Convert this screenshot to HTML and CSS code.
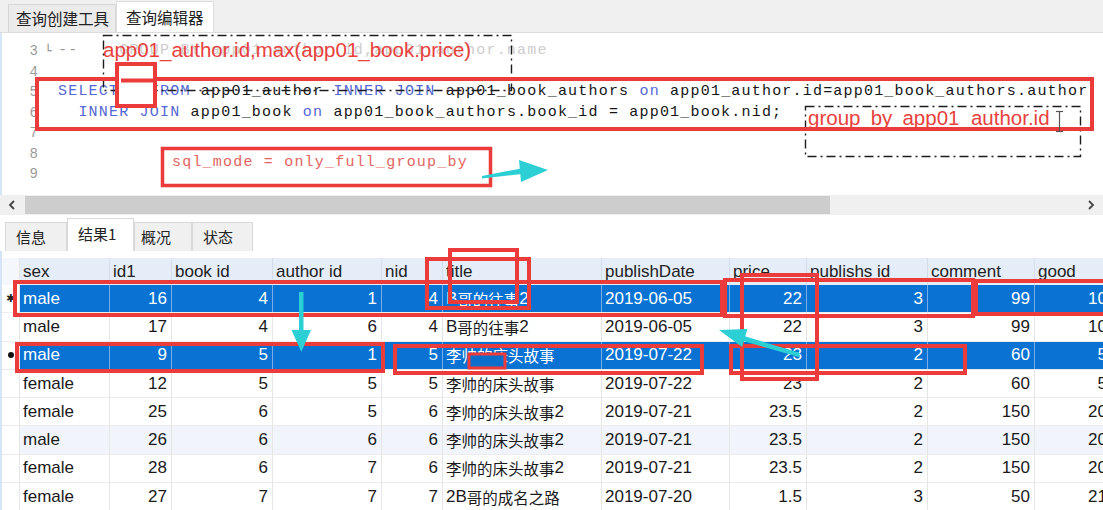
FILE: index.html
```html
<!DOCTYPE html>
<html lang="zh-CN">
<head>
<meta charset="utf-8">
<title>查询编辑器</title>
<link rel="stylesheet" href="styles.css">
</head>
<body>
<div class="app">
  <div class="tabbar">
    <div class="tab">查询创建工具</div>
    <div class="tab active">查询编辑器</div>
  </div>

  <div class="editor">
    <div class="line"><span class="ln">3</span><span class="fold">└</span><span class="code"><span class="dash">--</span><span class="cm">    GROUP BY app01_author.id,app01_author.name</span></span></div>
    <div class="line"><span class="ln">4</span><span class="fold"></span><span class="code"></span></div>
    <div class="line"><span class="ln">5</span><span class="fold"></span><span class="code"><span class="kw">SELECT</span> * <span class="kw">FROM</span> app01_author <span class="kw">INNER JOIN</span> app01_book_authors <span class="kw">on</span> app01_author.id=app01_book_authors.author</span></div>
    <div class="line"><span class="ln">6</span><span class="fold"></span><span class="code">  <span class="kw">INNER JOIN</span> app01_book <span class="kw">on</span> app01_book_authors.book_id = app01_book.nid;</span></div>
    <div class="line"><span class="ln">7</span><span class="fold"></span><span class="code"></span></div>
    <div class="line"><span class="ln">8</span><span class="fold"></span><span class="code"></span></div>
    <div class="line"><span class="ln">9</span><span class="fold"></span><span class="code"></span></div>
  </div>

  <div class="hscroll">
    <svg class="chev" width="10" height="12" viewBox="0 0 10 12"><polyline points="7,2 3,6 7,10" fill="none" stroke="#444" stroke-width="1.8"/></svg>
    <div class="thumb"></div>
    <div class="track"></div>
    <svg class="chev" width="10" height="12" viewBox="0 0 10 12"><polyline points="3,2 7,6 3,10" fill="none" stroke="#444" stroke-width="1.8"/></svg>
  </div>

  <div class="restabs">
    <div class="rtab w62">信息</div>
    <div class="rtab active w67">结果1</div>
    <div class="rtab w58 tight">概况</div>
    <div class="rtab w61">状态</div>
  </div>

  <div class="results">
    <div class="row head">
      <div class="ind"></div>
      <div class="c">sex</div><div class="c">id1</div><div class="c">book id</div><div class="c">author id</div><div class="c">nid</div><div class="c">title</div><div class="c">publishDate</div><div class="c">price</div><div class="c">publishs id</div><div class="c">comment</div><div class="c">good</div>
    </div>
    <div class="row sel">
      <div class="ind"><span class="star">✱</span></div>
      <div class="c">male</div><div class="c r">16</div><div class="c r">4</div><div class="c r">1</div><div class="c r">4</div><div class="c">B<span class="zh">哥的往事</span>2</div><div class="c">2019-06-05</div><div class="c r">22</div><div class="c r">3</div><div class="c r">99</div><div class="c r">10</div>
    </div>
    <div class="row">
      <div class="ind"></div>
      <div class="c">male</div><div class="c r">17</div><div class="c r">4</div><div class="c r">6</div><div class="c r">4</div><div class="c">B<span class="zh">哥的往事</span>2</div><div class="c">2019-06-05</div><div class="c r">22</div><div class="c r">3</div><div class="c r">99</div><div class="c r">10</div>
    </div>
    <div class="row sel">
      <div class="ind"><span class="dot"></span></div>
      <div class="c">male</div><div class="c r">9</div><div class="c r">5</div><div class="c r">1</div><div class="c r">5</div><div class="c"><span class="zh">李帅的床头故事</span></div><div class="c">2019-07-22</div><div class="c r">23</div><div class="c r">2</div><div class="c r">60</div><div class="c r">5</div>
    </div>
    <div class="row">
      <div class="ind"></div>
      <div class="c">female</div><div class="c r">12</div><div class="c r">5</div><div class="c r">5</div><div class="c r">5</div><div class="c"><span class="zh">李帅的床头故事</span></div><div class="c">2019-07-22</div><div class="c r">23</div><div class="c r">2</div><div class="c r">60</div><div class="c r">5</div>
    </div>
    <div class="row">
      <div class="ind"></div>
      <div class="c">female</div><div class="c r">25</div><div class="c r">6</div><div class="c r">5</div><div class="c r">6</div><div class="c"><span class="zh">李帅的床头故事</span>2</div><div class="c">2019-07-21</div><div class="c r">23.5</div><div class="c r">2</div><div class="c r">150</div><div class="c r">20</div>
    </div>
    <div class="row tint">
      <div class="ind"></div>
      <div class="c">male</div><div class="c r">26</div><div class="c r">6</div><div class="c r">6</div><div class="c r">6</div><div class="c"><span class="zh">李帅的床头故事</span>2</div><div class="c">2019-07-21</div><div class="c r">23.5</div><div class="c r">2</div><div class="c r">150</div><div class="c r">20</div>
    </div>
    <div class="row">
      <div class="ind"></div>
      <div class="c">female</div><div class="c r">28</div><div class="c r">6</div><div class="c r">7</div><div class="c r">6</div><div class="c"><span class="zh">李帅的床头故事</span>2</div><div class="c">2019-07-21</div><div class="c r">23.5</div><div class="c r">2</div><div class="c r">150</div><div class="c r">20</div>
    </div>
    <div class="row">
      <div class="ind"></div>
      <div class="c">female</div><div class="c r">27</div><div class="c r">7</div><div class="c r">7</div><div class="c r">7</div><div class="c">2B<span class="zh">哥的成名之路</span></div><div class="c">2019-07-20</div><div class="c r">1.5</div><div class="c r">3</div><div class="c r">50</div><div class="c r">21</div>
    </div>
  </div>

  <svg class="marks" width="1103" height="510" viewBox="0 0 1103 510">
    <g fill="none" stroke="#1c1c1c" stroke-width="1.4" stroke-dasharray="9 4 2 4">
      <rect x="103.5" y="35.5" width="408" height="55"/>
      <rect x="805.5" y="106.5" width="275" height="50"/>
    </g>
    <g fill="none" stroke="#ec3b3b" stroke-width="4">
      <rect x="37" y="79" width="1055" height="50"/>
      <rect x="117" y="64" width="38" height="42" fill="#fff"/>
      <line x1="121" y1="80.5" x2="155" y2="80.5"/>
      <rect x="162.5" y="148.5" width="328" height="37" stroke-width="3.5"/>
      <rect x="15" y="282" width="707" height="33"/>
      <rect x="725" y="280" width="248" height="36"/>
      <rect x="976" y="281" width="140" height="33"/>
      <rect x="742" y="275" width="75" height="104"/>
      <rect x="450" y="250" width="67" height="52"/>
      <rect x="427" y="259" width="102" height="49"/>
      <rect x="17" y="344" width="366" height="27"/>
      <rect x="395" y="346" width="307" height="27"/>
      <rect x="731" y="346" width="234" height="27"/>
      <rect x="469" y="354" width="36" height="14" stroke-width="3" fill="#0a6fcc"/>
    </g>
    <g fill="#2bcfd4">
      <polygon points="482,176 521,168.5 522,174 482,178.5"/>
      <polygon points="519,160 548,170 521,182"/>
      <rect x="299" y="292" width="4.5" height="42"/>
      <polygon points="291.5,330 311,330 301.3,352"/>
      <polygon points="744,336 800,353 799,357 743,341"/>
      <polygon points="719,330 747.4,329 742.1,347"/>
    </g>
    <g stroke="#555" stroke-width="1.2" fill="none">
      <line x1="1059.5" y1="112" x2="1059.5" y2="131"/>
      <line x1="1056" y1="111.5" x2="1063" y2="111.5"/>
      <line x1="1056" y1="131.5" x2="1063" y2="131.5"/>
    </g>
  </svg>

  <div class="note n1">app01_author.id,max(app01_book.price)</div>
  <div class="note n2">group by app01_author.id</div>
  <div class="note n3">sql_mode = only_full_group_by</div>
</div>
</body>
</html>
```
FILE: styles.css
```css
* { box-sizing: border-box; margin: 0; padding: 0; }
html, body { width: 1103px; height: 510px; overflow: hidden; background: #fff; }
body { font-family: "Liberation Sans", "Noto Sans CJK SC", sans-serif; color: #1a1a1a; }

.app { position: relative; width: 1103px; height: 510px; overflow: hidden; display: flex; flex-direction: column; }

/* top tabs */
.tabbar { height: 33px; flex: none; background: #f0f0f0; border-bottom: 1px solid #dcdcdc; display: flex; align-items: flex-end; padding-left: 8px; }
.tab { height: 28px; padding: 0 6px 0 7px; font-family: "Noto Sans CJK SC", sans-serif; font-size: 15.5px; line-height: 27px; background: #ebebeb; border: 1px solid #d6d6d6; border-bottom: none; color: #222; }
.tab.active { height: 31px; background: #fff; padding: 0 9px; line-height: 30px; border-color: #dedede; }

/* editor */
.editor { height: 162px; flex: none; padding-top: 8px; background: #fff; border-left: 2px solid #d3e5f6; overflow: hidden; }
.line { display: flex; height: 20.5px; line-height: 20.5px; white-space: pre; }
.ln { width: 36px; flex: none; text-align: right; font-family: "Liberation Mono", monospace; font-size: 14px; color: #9a9a9a; }
.fold { width: 20px; flex: none; text-align: center; font-family: "DejaVu Sans Mono", monospace; font-size: 12px; color: #8a8a8a; }
.code { font-family: "Liberation Mono", monospace; font-size: 15px; letter-spacing: 1.2px; color: #151515; white-space: pre; }
.dash { color: #9a9a9a; }
.cm { color: #cdcdcd; }
.kw { color: #5468d4; }

/* horizontal scrollbar */
.hscroll { height: 20px; flex: none; background: #f0f0f0; display: flex; align-items: center; padding: 0 7px 0 7px; gap: 8px; }
.chev { flex: none; }
.thumb { width: 805px; height: 18px; background: #cdcdcd; flex: none; }
.track { flex: 1; }

/* result tabs */
.restabs { height: 33px; flex: none; margin-top: 3px; display: flex; align-items: flex-end; padding-left: 5px; }
.rtab { height: 29px; padding-left: 10px; background: #f0f0f0; border: 1px solid #d9d9d9; border-bottom: none; font-family: "Noto Sans CJK SC", sans-serif; font-size: 15px; line-height: 28px; color: #222; }
.rtab.active { height: 33px; background: #fff; line-height: 30px; }
.rtab.tight { padding-left: 6px; }
.w62 { width: 62px; }
.w67 { width: 67px; }
.w58 { width: 58px; }
.w61 { width: 61px; }

/* result grid */
.results { flex: 1; padding-top: 7px; border-left: 2px solid #d3e5f6; width: 1112px; }
.row { display: grid; grid-template-columns: 18px 90px 62px 101px 109px 61px 159px 128px 77px 121px 107px 77px; height: 28.3px; border-bottom: 1px solid #ececec; font-size: 17px; }
.row.head { height: 27px; border-bottom: none; }
.c { display: flex; align-items: center; padding: 0 4px 0 3px; white-space: nowrap; overflow: hidden; border-right: 1px solid #e6e6e6; }
.c.r { justify-content: flex-end; }
.head .c { background: #e5edf8; border-right-color: #d3dce8; color: #222; }
.ind { display: flex; align-items: center; justify-content: center; border-right: 1px solid #e6e6e6; }
.head .ind { background: #f4f7fb; }
.sel .c { background: #0a72d3; color: #fff; border-right-color: #74ade8; }
.tint .c { background: #f1f5fb; }
.zh { font-family: "Noto Sans CJK SC", sans-serif; font-size: 15.5px; }
.star { font-family: "DejaVu Sans", sans-serif; font-size: 11px; color: #222; }
.dot { width: 6px; height: 6px; border-radius: 50%; background: #111; }

/* annotations */
.marks { position: absolute; left: 0; top: 0; pointer-events: none; }
.note { position: absolute; white-space: pre; color: #e8413c; }
.n1 { left: 103px; top: 40px; font-size: 20.5px; line-height: 20px; }
.n2 { left: 808px; top: 108px; font-size: 20.5px; line-height: 20px; word-spacing: 4.5px; }
.n3 { left: 172px; top: 153px; font-family: "Liberation Mono", monospace; font-size: 15px; letter-spacing: 1.2px; line-height: 20px; color: #e2645e; }
```
